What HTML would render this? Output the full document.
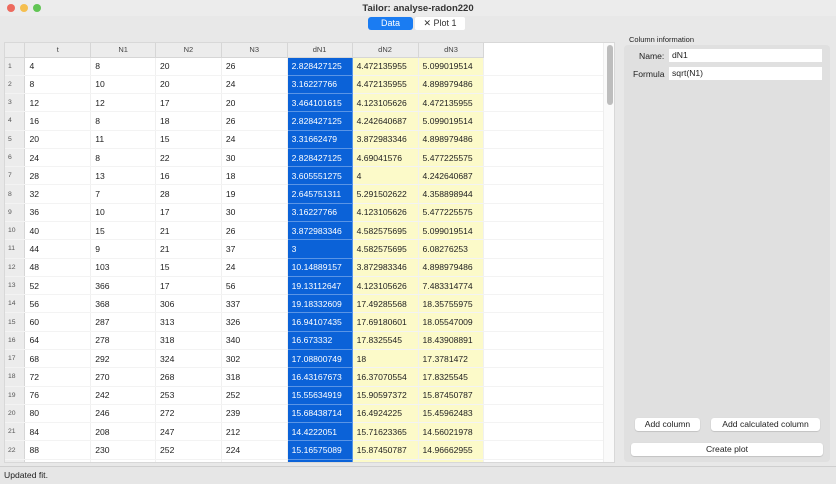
<!DOCTYPE html>
<html><head><meta charset="utf-8"><style>
*{margin:0;padding:0;box-sizing:border-box}
body{width:836px;height:484px;background:#e8e8e8;font-family:"Liberation Sans",sans-serif;position:relative;overflow:hidden;color:#222}
.title{position:absolute;left:0;top:0;width:836px;height:16px;background:#ececec;text-align:center;font-size:9.5px;font-weight:bold;line-height:17px;color:#333}
.dot{position:absolute;top:4px;width:8px;height:8px;border-radius:50%}
.tabs{position:absolute;top:17px;left:368px;height:13px;display:flex;font-size:9px;line-height:13px}
.tab1{width:45px;background:#1a7cf2;color:#fff;text-align:center;border-radius:3px}
.tab2{width:50px;background:#fff;text-align:center;margin-left:2px;border-radius:2px;color:#333}
.tbl{position:absolute;left:4px;top:42px;width:611px;height:421px;background:#fff;overflow:hidden;border:1px solid #d8d8d8}
table{border-collapse:collapse;table-layout:fixed;font-size:8.6px}
td{height:18.29px;padding-left:4px;border-right:1px solid #f0f0f0;border-bottom:1px solid #f3f3f3;white-space:nowrap;overflow:hidden}
th{height:14px;font-weight:normal;font-size:7.5px;color:#444;background:#ececec;border-right:1px solid #d6d6d6;border-bottom:1px solid #d6d6d6}
td.n{background:#ececec;font-size:6.8px;color:#555;padding-left:3px;border-right:1px solid #d6d6d6}
td.b{background:#0b62d8;color:#fff;border-bottom:1px solid #5a95e6;border-right:1px solid #5a95e6}
td.y{background:#fcfac9}
.sbt{position:absolute;left:598px;top:0;width:12px;height:421px;background:#fafafa;border-left:1px solid #eee;z-index:5}
.sb{position:absolute;left:3px;top:2px;width:6px;height:60px;background:#bdbdbd;border-radius:3px}
.grp{position:absolute;left:624px;top:45px;width:206px;height:417px;background:#e0e0e0;border-radius:4px}
.lbl{position:absolute;font-size:8.6px;color:#222;z-index:2}
.inp{position:absolute;background:#fff;height:13px;font-size:8.6px;line-height:13px;padding-left:3px;z-index:2}
.btn{position:absolute;background:#fff;height:13px;font-size:8.6px;line-height:13px;text-align:center;border-radius:3px;box-shadow:0 0.5px 1px #aaa;color:#222;z-index:2}
.status{position:absolute;left:0;top:466px;width:836px;height:18px;background:#e6e6e6;border-top:1px solid #cfcfcf;font-size:8.6px;line-height:17px;padding-left:4px}
</style></head><body>
<div class="title">Tailor: analyse-radon220</div>
<div class="dot" style="left:7px;background:#ed6a5e"></div>
<div class="dot" style="left:20px;background:#f5bf4f"></div>
<div class="dot" style="left:33px;background:#61c554"></div>
<div class="tabs"><div class="tab1">Data</div><div class="tab2">✕ Plot 1</div></div>
<div class="tbl">
<table>
<colgroup><col style="width:20px"><col style="width:66px"><col style="width:65px"><col style="width:66px"><col style="width:66px"><col style="width:65px"><col style="width:66px"><col style="width:66px"><col style="width:130px"></colgroup>
<tr><th></th><th>t</th><th>N1</th><th>N2</th><th>N3</th><th>dN1</th><th>dN2</th><th>dN3</th><th style="background:#fff;border:none"></th></tr>
<tr><td class="n">1</td><td>4</td><td>8</td><td>20</td><td>26</td><td class="b">2.828427125</td><td class="y">4.472135955</td><td class="y">5.099019514</td><td></td></tr>
<tr><td class="n">2</td><td>8</td><td>10</td><td>20</td><td>24</td><td class="b">3.16227766</td><td class="y">4.472135955</td><td class="y">4.898979486</td><td></td></tr>
<tr><td class="n">3</td><td>12</td><td>12</td><td>17</td><td>20</td><td class="b">3.464101615</td><td class="y">4.123105626</td><td class="y">4.472135955</td><td></td></tr>
<tr><td class="n">4</td><td>16</td><td>8</td><td>18</td><td>26</td><td class="b">2.828427125</td><td class="y">4.242640687</td><td class="y">5.099019514</td><td></td></tr>
<tr><td class="n">5</td><td>20</td><td>11</td><td>15</td><td>24</td><td class="b">3.31662479</td><td class="y">3.872983346</td><td class="y">4.898979486</td><td></td></tr>
<tr><td class="n">6</td><td>24</td><td>8</td><td>22</td><td>30</td><td class="b">2.828427125</td><td class="y">4.69041576</td><td class="y">5.477225575</td><td></td></tr>
<tr><td class="n">7</td><td>28</td><td>13</td><td>16</td><td>18</td><td class="b">3.605551275</td><td class="y">4</td><td class="y">4.242640687</td><td></td></tr>
<tr><td class="n">8</td><td>32</td><td>7</td><td>28</td><td>19</td><td class="b">2.645751311</td><td class="y">5.291502622</td><td class="y">4.358898944</td><td></td></tr>
<tr><td class="n">9</td><td>36</td><td>10</td><td>17</td><td>30</td><td class="b">3.16227766</td><td class="y">4.123105626</td><td class="y">5.477225575</td><td></td></tr>
<tr><td class="n">10</td><td>40</td><td>15</td><td>21</td><td>26</td><td class="b">3.872983346</td><td class="y">4.582575695</td><td class="y">5.099019514</td><td></td></tr>
<tr><td class="n">11</td><td>44</td><td>9</td><td>21</td><td>37</td><td class="b">3</td><td class="y">4.582575695</td><td class="y">6.08276253</td><td></td></tr>
<tr><td class="n">12</td><td>48</td><td>103</td><td>15</td><td>24</td><td class="b">10.14889157</td><td class="y">3.872983346</td><td class="y">4.898979486</td><td></td></tr>
<tr><td class="n">13</td><td>52</td><td>366</td><td>17</td><td>56</td><td class="b">19.13112647</td><td class="y">4.123105626</td><td class="y">7.483314774</td><td></td></tr>
<tr><td class="n">14</td><td>56</td><td>368</td><td>306</td><td>337</td><td class="b">19.18332609</td><td class="y">17.49285568</td><td class="y">18.35755975</td><td></td></tr>
<tr><td class="n">15</td><td>60</td><td>287</td><td>313</td><td>326</td><td class="b">16.94107435</td><td class="y">17.69180601</td><td class="y">18.05547009</td><td></td></tr>
<tr><td class="n">16</td><td>64</td><td>278</td><td>318</td><td>340</td><td class="b">16.673332</td><td class="y">17.8325545</td><td class="y">18.43908891</td><td></td></tr>
<tr><td class="n">17</td><td>68</td><td>292</td><td>324</td><td>302</td><td class="b">17.08800749</td><td class="y">18</td><td class="y">17.3781472</td><td></td></tr>
<tr><td class="n">18</td><td>72</td><td>270</td><td>268</td><td>318</td><td class="b">16.43167673</td><td class="y">16.37070554</td><td class="y">17.8325545</td><td></td></tr>
<tr><td class="n">19</td><td>76</td><td>242</td><td>253</td><td>252</td><td class="b">15.55634919</td><td class="y">15.90597372</td><td class="y">15.87450787</td><td></td></tr>
<tr><td class="n">20</td><td>80</td><td>246</td><td>272</td><td>239</td><td class="b">15.68438714</td><td class="y">16.4924225</td><td class="y">15.45962483</td><td></td></tr>
<tr><td class="n">21</td><td>84</td><td>208</td><td>247</td><td>212</td><td class="b">14.4222051</td><td class="y">15.71623365</td><td class="y">14.56021978</td><td></td></tr>
<tr><td class="n">22</td><td>88</td><td>230</td><td>252</td><td>224</td><td class="b">15.16575089</td><td class="y">15.87450787</td><td class="y">14.96662955</td><td></td></tr>
<tr><td class="n"></td><td></td><td></td><td></td><td></td><td class="b"></td><td class="y"></td><td class="y"></td><td></td></tr>
</table>
<div class="sbt"><div class="sb"></div></div>
</div>
<div class="lbl" style="left:629px;top:35px;font-size:7.5px">Column information</div>
<div class="grp"></div>
<div class="lbl" style="left:639px;top:51px">Name:</div>
<div class="inp" style="left:669px;top:49px;width:153px">dN1</div>
<div class="lbl" style="left:633px;top:69px">Formula</div>
<div class="inp" style="left:669px;top:67px;width:153px">sqrt(N1)</div>
<div class="btn" style="left:635px;top:418px;width:65px">Add column</div>
<div class="btn" style="left:711px;top:418px;width:109px">Add calculated column</div>
<div class="btn" style="left:631px;top:443px;width:192px">Create plot</div>
<div class="status">Updated fit.</div>
</body></html>
